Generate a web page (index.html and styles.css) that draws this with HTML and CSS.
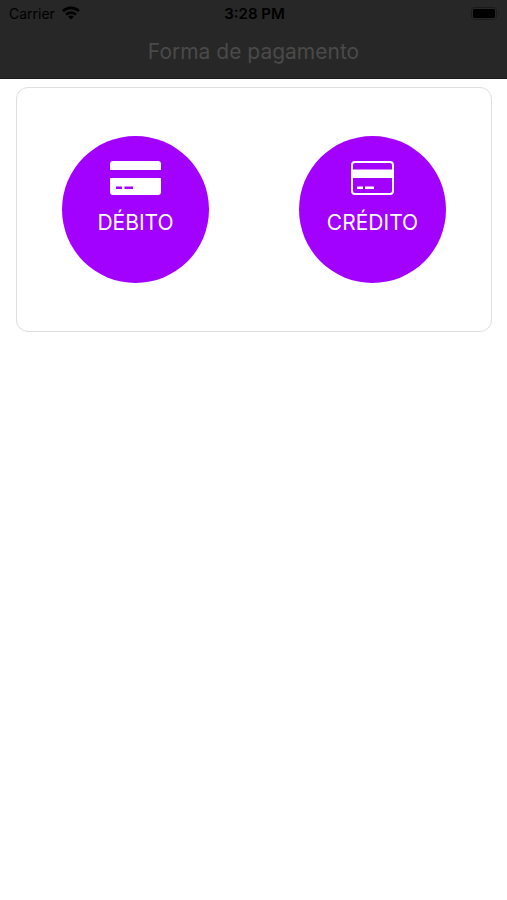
FILE: index.html
```
<!DOCTYPE html>
<html lang="pt-BR">
<head>
    <meta charset="utf-8">
    <title>Forma de pagamento</title>
    <meta name="viewport" content="width=device-width, initial-scale=1">
    <link rel="stylesheet" href="styles.css">
</head>
<body>
    <header class="header">
        <div class="status">
            <div class="carrier">
                <span>Carrier</span>
                <svg width="18" height="14" viewBox="0 0 18 14" fill="none" stroke="#000" stroke-width="2.6">
                    <path d="M1 5.2a11.4 11.4 0 0 1 16 0"></path>
                    <path d="M4 8.6a7.2 7.2 0 0 1 10 0"></path>
                    <path d="M9 13.6L6.2 10.8a4 4 0 0 1 5.6 0z" fill="#000" stroke="none"></path>
                </svg>
            </div>
            <span class="time">3:28 PM</span>
            <div class="battery">
                <svg width="29" height="13" viewBox="0 0 29 13">
                    <rect x="0.5" y="0.5" width="25" height="12" rx="3" fill="none" stroke="#1b1b1b"></rect>
                    <rect x="2" y="2" width="22" height="9" rx="1.5" fill="#000"></rect>
                    <path d="M27 4.5q2 2 0 4z" fill="#1b1b1b"></path>
                </svg>
            </div>
        </div>
        <h1 class="title">Forma de pagamento</h1>
    </header>
    <main class="card">
        <div class="option">
            <button type="button" class="circle">
                <svg width="51" height="34" viewBox="0 0 51 34" fill="#fff">
                    <path d="M0 9V3a3 3 0 0 1 3-3h45a3 3 0 0 1 3 3v6z"></path>
                    <path fill-rule="evenodd" d="M0 17h51v14a3 3 0 0 1-3 3H3a3 3 0 0 1-3-3zM6 25.500v2.500h6v-2.500zM14.500 25.500v2.500h8.500v-2.500z"></path>
                </svg>
                <span>DÉBITO</span>
            </button>
        </div>
        <div class="option">
            <button type="button" class="circle">
                <svg width="43" height="34" viewBox="0 0 43 34" fill="#fff">
                    <rect x="1" y="1" width="41" height="32" rx="3" fill="none" stroke="#fff" stroke-width="2"></rect>
                    <rect x="1" y="8.500" width="41" height="8.500"></rect>
                    <rect x="6" y="25.500" width="6" height="2.500"></rect>
                    <rect x="14" y="25.500" width="9" height="2.500"></rect>
                </svg>
                <span>CRÉDITO</span>
            </button>
        </div>
    </main>
</body>
</html>
```
FILE: styles.css
```
*{
    box-sizing: border-box;
}
body{
    margin:0;
    background-color: #fff;
    font-family: Inter, "Liberation Sans", sans-serif;
}
.header{
    background-color: #272727;
    border-bottom:1px solid #1b1b1b;
    padding-bottom: 12px;
}
.status{
    display:grid;
    grid-template-columns: 1fr auto 1fr;
    align-items: center;
    height:26px;
    padding:0 7px 0 9px;
    font-size: 14px;
    color:#000;
}
.carrier{
    display:flex;
    align-items: center;
    gap:7px;
}
.time{
    font-size: 15px;
    font-weight: 600;
}
.battery{
    display:flex;
    justify-content: flex-end;
}
.title{
    margin:12px 0 0;
    font-size: 21px;
    line-height: 28px;
    font-weight: 400;
    text-align: center;
    color:#4a4a4a;
}
.card{
    display:flex;
    margin:8px 15px 8px 16px;
    padding:48px 0;
    border:1px solid #dedede;
    border-radius: 12px;
}
.option{
    flex:1;
    display:flex;
    justify-content: center;
}
.circle{
    display:flex;
    flex-direction: column;
    align-items: center;
    gap:14px;
    width:147px;
    height:147px;
    padding:25px 0 0;
    border:none;
    border-radius: 50%;
    background-color: #a200ff;
    color:#fff;
    font-family: inherit;
    font-size: 21px;
    line-height: 28px;
    font-weight: 400;
}
```
